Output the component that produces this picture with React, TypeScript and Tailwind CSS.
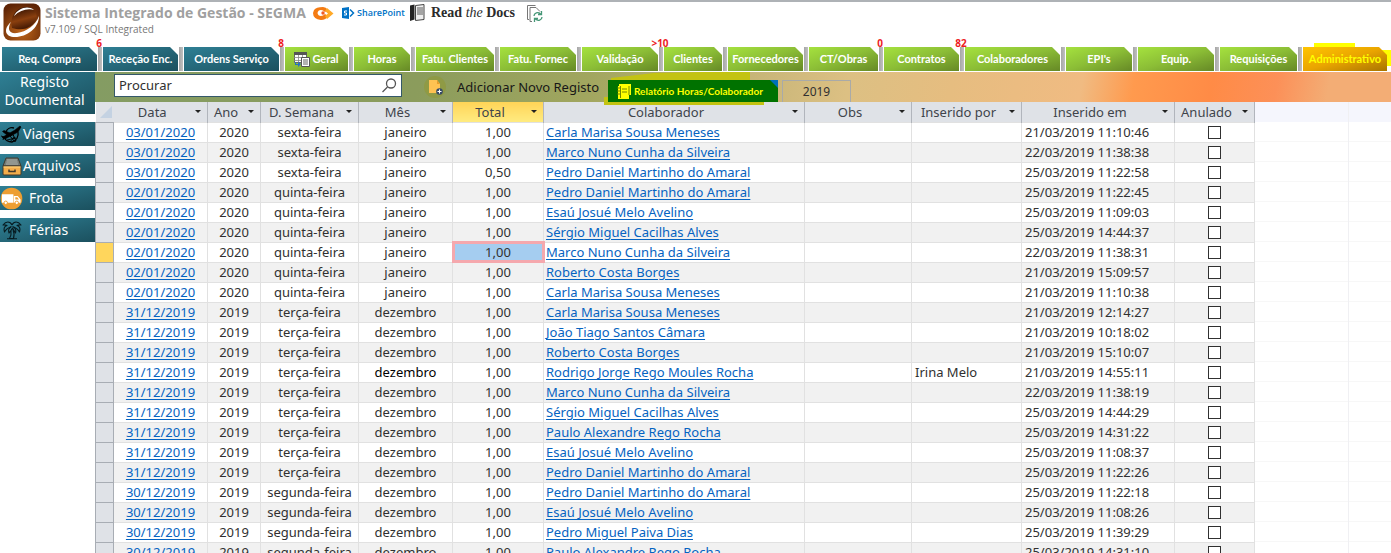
import React from "react";

type Tab = { label: string; w: string; tone: "teal" | "green" | "gold"; count?: string; icon?: boolean };
const tabs: Tab[] = [
  { label: "Req. Compra", w: "w-[101px]", tone: "teal", count: "6" },
  { label: "Receção Enc.", w: "w-[81px]", tone: "teal" },
  { label: "Ordens Serviço", w: "w-[101px]", tone: "teal", count: "8" },
  { label: "Geral", w: "w-[69px]", tone: "green", icon: true },
  { label: "Horas", w: "w-[62px]", tone: "green" },
  { label: "Fatu. Clientes", w: "w-[84px]", tone: "green" },
  { label: "Fatu. Fornec", w: "w-[82px]", tone: "green" },
  { label: "Validação", w: "w-[82px]", tone: "green", count: ">10" },
  { label: "Clientes", w: "w-[64px]", tone: "green" },
  { label: "Fornecedores", w: "w-[81px]", tone: "green" },
  { label: "CT/Obras", w: "w-[75px]", tone: "green", count: "0" },
  { label: "Contratos", w: "w-[81px]", tone: "green", count: "82" },
  { label: "Colaboradores", w: "w-[101px]", tone: "green" },
  { label: "EPI's", w: "w-[72px]", tone: "green" },
  { label: "Equip.", w: "w-[82px]", tone: "green" },
  { label: "Requisições", w: "w-[83px]", tone: "green" },
  { label: "Administrativo", w: "w-[88px]", tone: "gold" },
];

const tones = {
  teal: "from-[#2f8095] to-[#1b505e] text-white",
  green: "from-[#a5e23e] via-[#8bbd36] to-[#668926] text-white",
  gold: "from-[#ffc400] via-[#eaa500] to-[#a87400] text-[#ffff00]",
};
const cut = "[clip-path:polygon(0_0,calc(100%-8px)_0,100%_8px,100%_100%,0_100%)]";
const tabShadow =
  "bg-[linear-gradient(90deg,transparent_calc(100%-5px),#a6a6a6_calc(100%-5px),#c0c0c0_calc(100%-1px),transparent_calc(100%-1px))]";

const people = {
  carla: "Carla Marisa Sousa Meneses",
  marco: "Marco Nuno Cunha da Silveira",
  pedro: "Pedro Daniel Martinho do Amaral",
  esau: "Esaú Josué Melo Avelino",
  sergio: "Sérgio Miguel Cacilhas Alves",
  roberto: "Roberto Costa Borges",
};
const records: [string, string, string, string, string?][] = [
  ["03/01/2020", "1,00", people.carla, "21/03/2019 11:10:46"],
  ["03/01/2020", "1,00", people.marco, "22/03/2019 11:38:38"],
  ["03/01/2020", "0,50", people.pedro, "25/03/2019 11:22:58"],
  ["02/01/2020", "1,00", people.pedro, "25/03/2019 11:22:45"],
  ["02/01/2020", "1,00", people.esau, "25/03/2019 11:09:03"],
  ["02/01/2020", "1,00", people.sergio, "25/03/2019 14:44:37"],
  ["02/01/2020", "1,00", people.marco, "22/03/2019 11:38:31"],
  ["02/01/2020", "1,00", people.roberto, "21/03/2019 15:09:57"],
  ["02/01/2020", "1,00", people.carla, "21/03/2019 11:10:38"],
  ["31/12/2019", "1,00", people.carla, "21/03/2019 12:14:27"],
  ["31/12/2019", "1,00", "João Tiago Santos Câmara", "21/03/2019 10:18:02"],
  ["31/12/2019", "1,00", people.roberto, "21/03/2019 15:10:07"],
  ["31/12/2019", "1,00", "Rodrigo Jorge Rego Moules Rocha", "21/03/2019 14:55:11", "Irina Melo"],
  ["31/12/2019", "1,00", people.marco, "22/03/2019 11:38:19"],
  ["31/12/2019", "1,00", people.sergio, "25/03/2019 14:44:29"],
  ["31/12/2019", "1,00", "Paulo Alexandre Rego Rocha", "25/03/2019 14:31:22"],
  ["31/12/2019", "1,00", people.esau, "25/03/2019 11:08:37"],
  ["31/12/2019", "1,00", people.pedro, "25/03/2019 11:22:26"],
  ["30/12/2019", "1,00", people.pedro, "25/03/2019 11:22:18"],
  ["30/12/2019", "1,00", people.esau, "25/03/2019 11:08:26"],
  ["30/12/2019", "1,00", "Pedro Miguel Paiva Dias", "25/03/2019 11:39:29"],
  ["30/12/2019", "1,00", "Paulo Alexandre Rego Rocha", "25/03/2019 14:31:10"],
];
const weekdays: Record<string, string> = {
  "03/01": "sexta-feira",
  "02/01": "quinta-feira",
  "31/12": "terça-feira",
  "30/12": "segunda-feira",
};
const columns = [
  { label: "Data", w: "w-[94px]" },
  { label: "Ano", w: "w-[53px]" },
  { label: "D. Semana", w: "w-[98px]" },
  { label: "Mês", w: "w-[94px]" },
  { label: "Total", w: "w-[91px]" },
  { label: "Colaborador", w: "w-[261px]" },
  { label: "Obs", w: "w-[107px]" },
  { label: "Inserido por", w: "w-[110px]" },
  { label: "Inserido em", w: "w-[153px]" },
  { label: "Anulado", w: "w-[80px]" },
];

function Logo() {
  return (
    <svg className="h-[38px] w-[38px] shrink-0" viewBox="0 0 38 38" aria-hidden="true">
      <defs>
        <radialGradient id="lg" cx=".5" cy=".75" r=".75">
          <stop offset="0" stopColor="#c0661a" />
          <stop offset="1" stopColor="#5e2405" />
        </radialGradient>
        <linearGradient id="ball" x1=".3" y1="0" x2=".6" y2="1">
          <stop offset="0" stopColor="#2a0d01" />
          <stop offset=".55" stopColor="#8a3f0e" />
          <stop offset="1" stopColor="#3a1402" />
        </linearGradient>
      </defs>
      <rect x=".5" y=".5" width="37" height="37" rx="7" fill="url(#lg)" />
      <path d="M9 25C6 13 14 4 24 4 30 4 33 8 34 15 31 23 22 29 9 25Z" fill="url(#ball)" />
      <path d="M11 13C15 5 25 2 31 7 25 5 17 7 11 13Z" fill="#fff" />
      <path d="M8 19C0 26 2 34 12 34 24 34 36 25 36 13 33 22 23 29 14 30 6 31 4 26 8 19Z" fill="#fff" />
    </svg>
  );
}

function Caret() {
  return (
    <svg className="h-[3px] w-[6px] shrink-0" viewBox="0 0 6 3" aria-hidden="true">
      <path d="M0 0h6L3 3Z" fill="#222" />
    </svg>
  );
}

function TableIcon() {
  return (
    <svg className="h-4 w-4 shrink-0" viewBox="0 0 16 16" aria-hidden="true">
      <path d="M.5 1.500h12v10H.5Z" fill="#fff" stroke="#666" />
      <path d="M0 1h13v3H0Z" fill="#555" />
      <path d="M4.500 4v8M8.500 4v8M0 6.500h12M0 9.500h12" stroke="#888" strokeWidth=".8" />
      <path d="M7.500 6.500h8v9h-8Z" fill="#fff" stroke="#555" />
      <path d="M9 9h5M9 11h5M9 13h5" stroke="#666" />
      <path d="M1 11v3h3v2l3-3-3-2v2H2v-2Z" fill="#276fc0" />
    </svg>
  );
}

function Plane() {
  return (
    <svg className="h-[20px] w-[21px]" viewBox="0 0 21 20" fill="none" stroke="#000" aria-hidden="true">
      <path d="M5 8c1-3 4-5 8-4M17 8c1 5-2 9-6 10-4 0-7-2-7-4" strokeWidth="1.300" />
      <path d="M1 13.500 14 6l5-4 1 1-3 5-13 7Z" fill="#000" strokeWidth=".6" />
      <path d="M9 9 3 6.500 1.500 7.500 6 11Z" fill="#000" strokeWidth=".6" />
      <path d="M12 10.500 15 17l-1.500.5L9 12Z" strokeWidth="1" />
      <path d="M0 12l3 1-1 3M6 16l9-2M9 18l4-5" strokeWidth=".9" />
    </svg>
  );
}
function Archive() {
  return (
    <svg className="h-[19px] w-[20px]" viewBox="0 0 20 19" aria-hidden="true">
      <path d="M4 1h12l3 8H1Z" fill="#777d78" stroke="#423a2c" />
      <path d="M5 3h10M4.500 5h11M4 7h12" stroke="#c7c7bb" strokeWidth=".7" />
      <path d="M1 9h18v8q0 1-1 1H2q-1 0-1-1Z" fill="#f4ae4b" stroke="#423a2c" />
      <path d="M1.500 10h17" stroke="#ffd680" />
      <path d="M7 12.500v2h6v-2" fill="none" stroke="#423a2c" strokeWidth="1.500" />
    </svg>
  );
}
function Truck() {
  return (
    <svg className="h-[23px] w-[24px]" viewBox="0 0 24 23" aria-hidden="true">
      <circle cx="12" cy="11.500" r="11.300" fill="#ed9e32" />
      <path d="M2 7h12v9H2ZM14.500 9h4l3 3.500V16h-7Z" fill="#fff" />
      <path d="M16 10.200h2l1.800 2.300H16Z" fill="#ed9e32" />
      <circle cx="6" cy="16" r="1.800" fill="#fff" stroke="#ed9e32" />
      <circle cx="17.500" cy="16" r="1.800" fill="#fff" stroke="#ed9e32" />
    </svg>
  );
}
function Palm() {
  return (
    <svg className="h-[20px] w-[20px]" viewBox="0 0 20 20" fill="none" stroke="#071b20" strokeWidth="1.100" strokeLinejoin="round" aria-hidden="true">
      <path d="M10 5C8 1 4 1 1 5c2-.5 3 0 4 .5C2 6.500 1.500 9 2.500 12 4 9 7 7.500 9.500 6.500M10 5c2-4 6-4 9 0-2-.5-3 0-4 .5 3 1 3.500 3.500 2.500 6.500C16 9 13 7.500 10.500 6.500" />
      <path d="M9 7c-2 1-3 3-2 6 1-2 3-3 3.500-5 1 2 2 3 3 5 1-3-.5-5-2-6M9 11c.5 3 0 5-1.500 7.500h4C12.500 15 12 12 11 10M5 18.700h10" />
    </svg>
  );
}

function SideButton({ label, icon, pad }: { label: string; icon: React.ReactNode; pad?: boolean }) {
  return (
    <button className="flex h-6 w-full items-center bg-linear-to-br from-[#2f8095] to-[#1b505e] text-left text-[14px] leading-5 text-white">
      <span className="flex w-[23px] shrink-0 justify-center">{icon}</span>
      <span className={pad ? "pl-1.5" : ""}>{label}</span>
    </button>
  );
}

function Brand() {
  return (
    <header className="flex h-[47px] items-start border-t-2 border-[#aeb2b6] pt-px pl-[3px]">
      <Logo />
      <div className="pl-1">
        <div className="flex h-5 items-center">
          <h1 className="w-[268px] whitespace-nowrap font-['Open_Sans',sans-serif] text-[14px] leading-5 font-bold text-[#a0a0a0]">
            Sistema Integrado de Gestão - SEGMA
          </h1>
          <svg className="h-[15px] w-[21px]" viewBox="0 0 21 15" aria-hidden="true">
            <path d="M1 4Q3 1 10 1q3 0 5 3l-3 2Q10 4 8 4 5 4 4.500 7 5 10 8 10q2 0 4-2l3 2q-2 4-7 4Q0 13 0 7Z" fill="#f47b13" />
            <path d="m14 2 6.500 5.500L14 13l-2-3 3-2.500L12 5Z" fill="#ffa928" />
            <circle cx="10" cy="7" r="1.700" fill="#f15a22" />
          </svg>
          <a href="#sharepoint" className="ml-2 flex w-[64px] items-center gap-0.5 font-['Open_Sans',sans-serif] text-[9px] font-semibold text-[#0072c6]">
            <svg className="h-3 w-[13px] shrink-0" viewBox="0 0 13 12" aria-hidden="true">
              <path d="M0 1l7-1v12l-7-1Z" fill="#0072c6" />
              <path d="m8 2.500 3.500 3.500L8 9.500" fill="none" stroke="#0072c6" strokeWidth="1.500" />
              <path d="M5 4H2.500v2h2v2H2" fill="none" stroke="#fff" />
            </svg>
            SharePoint
          </a>
          <a href="#docs" className="ml-1 flex items-center gap-1.5 whitespace-nowrap font-['Liberation_Serif',serif] text-[14px] leading-5 font-bold text-[#2b2b2b]">
            <svg className="h-[18px] w-[15px]" viewBox="0 0 15 18" aria-hidden="true">
              <path d="M0 1.500 4.500.5v15L0 17Z" fill="#222" />
              <path d="M5.500 1.500 14 .5v15l-8.500 1Z" fill="#eee" stroke="#444" />
              <path d="M7 4h6M7 6h6M7 8h6M7 10h6" stroke="#333" strokeWidth=".8" />
            </svg>
            <span>Read <i className="font-normal">the</i> Docs</span>
          </a>
          <button aria-label="Atualizar" className="ml-3">
            <svg className="h-[17px] w-4" viewBox="0 0 16 17" fill="none" aria-hidden="true">
              <path d="M2 14.500H.5V.5h8M5 16.500H3V2.500h6l4 4" stroke="#777" />
              <path d="M7 11c0-3 4-4.500 6.500-2M15 12c0 3-4 4.500-6.500 2M14.500 6v3.500H11M7.500 17v-3.500H11" stroke="#469777" strokeWidth="1.300" />
            </svg>
          </button>
        </div>
        <p className="font-['Open_Sans',sans-serif] text-[10px] leading-3 text-[#777]">v7.109 / SQL Integrated</p>
      </div>
    </header>
  );
}

export default function App() {
  return (
    <div className="h-screen overflow-hidden bg-white font-['Noto_Sans',sans-serif] text-[#303030]">
      <Brand />
      <nav className="flex h-[25px] pl-[2px] font-['Lato',sans-serif]" aria-label="Módulos">
        {tabs.map((t) => (
          <div key={t.label} className={`relative shrink-0 ${t.w}`}>
            {t.tone === "gold" && (
              <>
                <span className="absolute -top-1 left-[11px] h-3 w-[41px] bg-[#ffff00]" />
                <span className="absolute top-[3px] right-0 h-4 w-3 bg-[#ffff00]" />
              </>
            )}
            <div className={`relative h-6 ${t.tone === "gold" ? "pr-1" : `${tabShadow} pr-1.5`}`}>
              <button
                className={`flex h-6 w-full items-center justify-center gap-0.5 bg-linear-to-br text-[11px] leading-4 font-bold whitespace-nowrap ${tones[t.tone]} ${cut}`}
              >
                {t.icon && <TableIcon />}
                {t.label}
              </button>
            </div>
            {t.count && (
              <span className="absolute -top-2.5 right-1 translate-x-1/2 font-['Noto_Sans',sans-serif] text-[10px] leading-3 font-bold text-[#ed1c24]">
                {t.count}
              </span>
            )}
          </div>
        ))}
      </nav>
      <div className="flex">
        <aside className="flex w-[95px] shrink-0 flex-col gap-2 text-white">
          <button className="h-[42px] w-full bg-linear-to-br from-[#2f8095] to-[#1b505e] pr-1.5 pb-1 text-[14px] leading-[18px]">
            Registo
            <br />
            Documental
          </button>
          <SideButton label="Viagens" icon={<Plane />} />
          <SideButton label="Arquivos" icon={<Archive />} />
          <SideButton label="Frota" icon={<Truck />} pad />
          <SideButton label="Férias" icon={<Palm />} pad />
        </aside>
        <main className="min-w-0 flex-1">
          <div className="flex h-[30px] items-start bg-[linear-gradient(100deg,#849c63_0%,#8b9c5c_25%,#a1a65f_38%,#c5b477_50%,#dcc083_58%,#e6bd80_66%,#f0bb82_76%,#ff9a4e_80%,#ff8b46_86%,#fc9058_91%,#f3ad75_95%)] pl-[19px]">
            <label className="mt-0.5 flex h-[23px] w-[288px] items-center border border-[#34586a] bg-white">
              <input aria-label="Procurar" defaultValue="Procurar" className="min-w-0 flex-1 pl-1 text-[13px] outline-none" />
              <svg className="mr-1 h-[15px] w-[15px]" viewBox="0 0 15 15" fill="none" stroke="#555" strokeWidth="1.300" aria-hidden="true">
                <circle cx="9" cy="5.500" r="4.500" />
                <path d="m5.500 9-5 5" />
              </svg>
            </label>
            <button className="mt-1 ml-[21px] flex w-[175px] items-center gap-2.5 text-[13px] leading-[22px] whitespace-nowrap text-[#171717]">
              <svg className="h-[22px] w-6 shrink-0" viewBox="0 0 24 22" aria-hidden="true">
                <circle cx="12" cy="11" r="11" fill="#8f9a45" />
                <path d="M6 4h8l3 4v9H6Z" fill="#ffc252" />
                <path d="m14 4 3 4h-3Z" fill="#e89d2a" />
                <circle cx="16.500" cy="15.500" r="3.300" fill="#384b66" />
                <path d="M14.500 15.500h4M16.500 13.500v4" stroke="#fff" />
              </svg>
              Adicionar Novo Registo
            </button>
            <div className="relative mt-2 ml-[10px] bg-[#0070b8]">
              <span className="absolute -top-2 -left-1 h-[33px] w-[160px] bg-[#c3c312] [clip-path:polygon(7px_6px,50px_1px,100px_0,146px_0,146px_10px,160px_10px,160px_33px,0_33px,0_25px,7px_25px)]" />
              <span className="absolute top-0.5 right-0 h-2 w-2 bg-[#c3c312]" />
              <span className="absolute inset-0 bg-[#0070b8]" />
              <button
                className={`relative flex h-[22px] w-[170px] items-center gap-0.5 bg-[#007200] pl-[9px] font-['Lato',sans-serif] text-[10px] font-bold whitespace-nowrap text-[#ffff00] ${cut}`}
              >
                <svg className="h-[15px] w-[15px] shrink-0" viewBox="0 0 15 15" aria-hidden="true">
                  <path d="M2 0h12v11h-2v4H1V2h1Z" fill="#ff0" />
                  <path d="M3.500 2v12M12 2v9M5 5h5M5 8h5M0 4h3M0 7h3M0 10h3" stroke="#607800" strokeWidth=".9" />
                </svg>
                Relatório Horas/Colaborador
              </button>
            </div>
            <input
              aria-label="Ano"
              defaultValue="2019"
              className="mt-2 ml-1 h-[22px] w-[69px] border border-b-0 border-[#a9aaa8] text-center text-[12px] text-[#303030]"
            />
          </div>
          <div className="flex">
            <table className="w-[1159px] shrink-0 table-fixed border-collapse text-[13px] leading-4">
              <colgroup>
                <col className="w-[18px]" />
                {columns.map((c) => (
                  <col key={c.label} className={c.w} />
                ))}
              </colgroup>
              <thead>
                <tr className="h-5 bg-[#dfe2e7] text-[#40444b]">
                  <th aria-label="Selecionar" className="p-0">
                    <svg className="ml-1 h-3 w-3" viewBox="0 0 12 12" aria-hidden="true">
                      <path d="M12 0v12H0Z" fill="#c4d2e2" />
                    </svg>
                  </th>
                  {columns.map((c) => (
                    <th
                      key={c.label}
                      className={`border-r border-[#b1b5bc] p-0 font-normal ${c.label === "Total" ? "bg-linear-to-b from-[#ffd456] to-[#ffeb80]" : ""}`}
                    >
                      <div className="flex items-center pr-1.5">
                        <span className="flex-1 pr-1 text-center whitespace-nowrap">{c.label}</span>
                        <Caret />
                      </div>
                    </th>
                  ))}
                </tr>
              </thead>
              <tbody>
                {records.map(([date, total, name, inserted, by], i) => {
                  const td = "border border-[#e1e1e1] p-0";
                  return (
                    <tr key={i} className={`h-5 ${i % 2 ? "bg-[#f1f1f1]" : "bg-white"}`}>
                      <td className={`border border-[#a8adb4] ${i === 6 ? "bg-[#ffd65c]" : "bg-[#dfe2e7]"}`} />
                      <td className={`${td} text-center`}>
                        <a href="#registo" className="text-[#0563c1] underline underline-offset-2">{date}</a>
                      </td>
                      <td className={`${td} text-center`}>{date.slice(6)}</td>
                      <td className={`${td} text-center`}>{weekdays[date.slice(0, 5)]}</td>
                      <td className={`${td} text-center ${by ? "text-black" : ""}`}>{date.slice(3, 5) === "01" ? "janeiro" : "dezembro"}</td>
                      <td className={`${td} text-center ${i === 6 ? "bg-[#a5cdf0] outline-3 -outline-offset-2 outline-[#f5a8ad]" : ""}`}>{total}</td>
                      <td className={`${td} pl-0.5 whitespace-nowrap`}>
                        <a href="#colaborador" className="text-[#0563c1] underline underline-offset-2">{name}</a>
                      </td>
                      <td className={td} />
                      <td className={`${td} pl-[3px]`}>{by}</td>
                      <td className={`${td} pl-[3px] whitespace-nowrap`}>{inserted}</td>
                      <td className={td}>
                        <input
                          type="checkbox"
                          aria-label={`Anulado ${i + 1}`}
                          className="mx-auto block h-[13px] w-[13px] appearance-none border border-[#303030] bg-white"
                        />
                      </td>
                    </tr>
                  );
                })}
              </tbody>
            </table>
            <div className="min-w-0 flex-1 bg-[repeating-linear-gradient(#ffffff_0,#ffffff_19px,#f7f7f7_19px,#f7f7f7_20px)]">
              <div className="h-5 bg-[#f5f6fd]" />
            </div>
            <div className="w-[43px] border-l border-[#f0f0f3] bg-[repeating-linear-gradient(#ffffff_0,#ffffff_19px,#f7f7f7_19px,#f7f7f7_20px)]">
              <div className="h-5 bg-[#f5f6fd]" />
            </div>
          </div>
        </main>
      </div>
    </div>
  );
}
